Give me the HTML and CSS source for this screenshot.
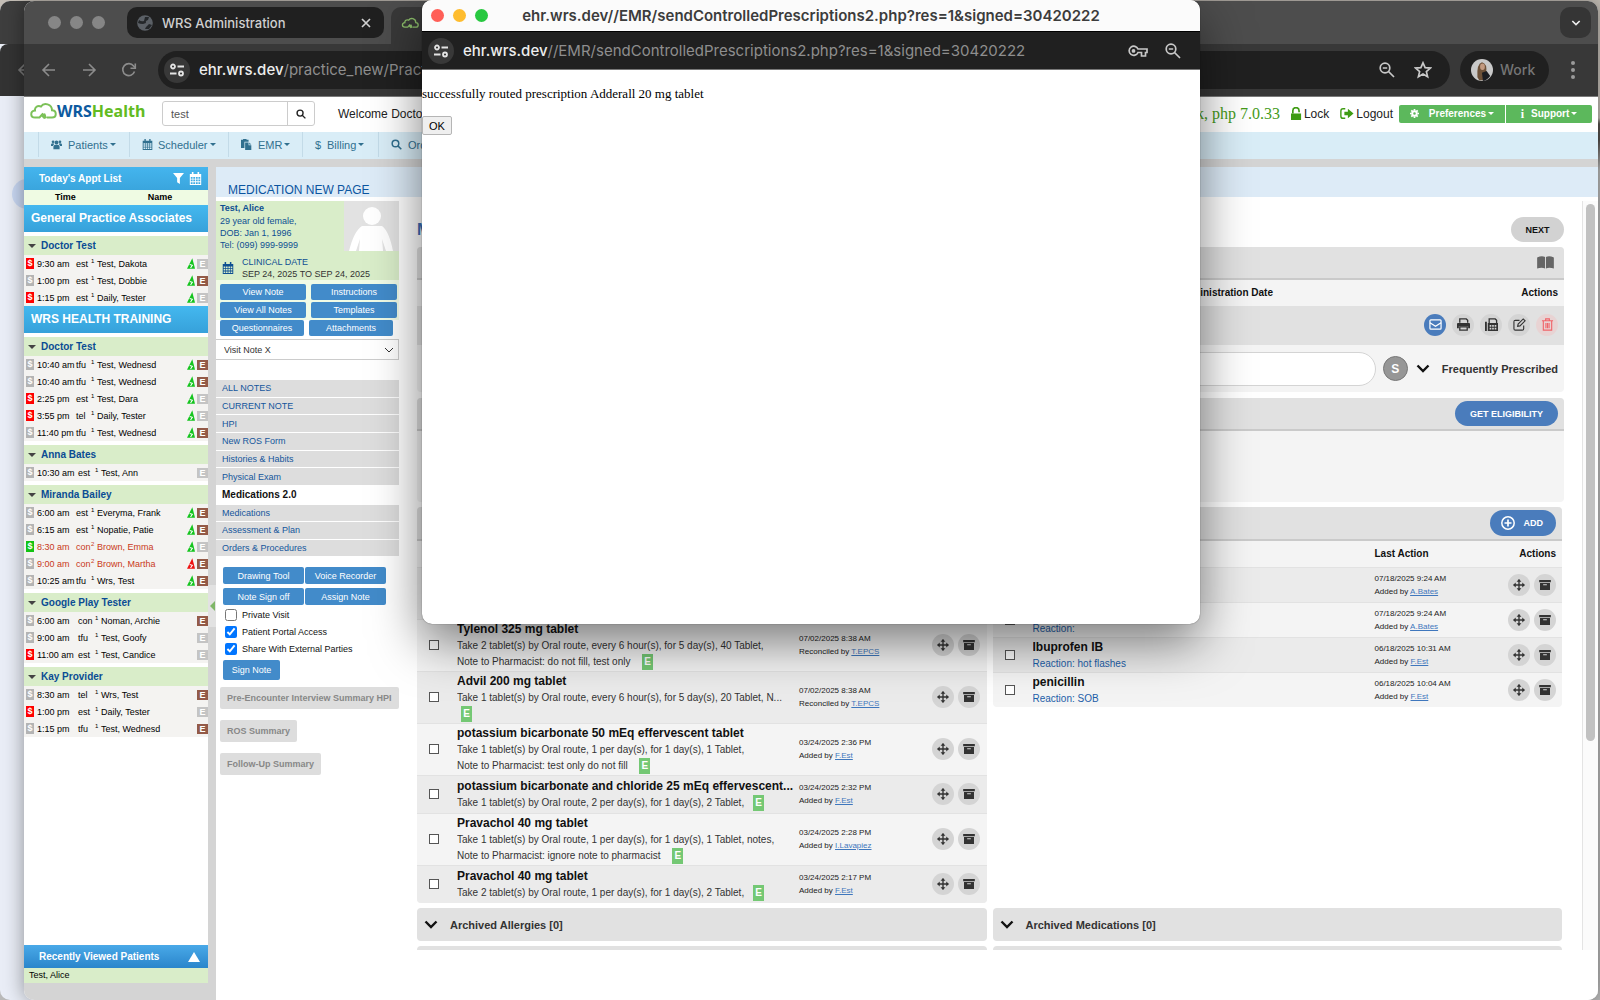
FILE: index.html
```html
<!DOCTYPE html>
<html lang="en">
<head>
<meta charset="utf-8">
<title>WRS Health EMR</title>
<link rel="stylesheet" href="styles.css">
</head>
<body>
<svg class="sprite" aria-hidden="true">
  <symbol id="i-back" viewBox="0 0 16 16"><path d="M14 8H2.500M8 2 2 8l6 6" fill="none" stroke="currentColor" stroke-width="1.600"/></symbol>
  <symbol id="i-fwd" viewBox="0 0 16 16"><path d="M2 8h11.500M8 2l6 6-6 6" fill="none" stroke="currentColor" stroke-width="1.600"/></symbol>
  <symbol id="i-reload" viewBox="0 0 16 16"><path d="M13.500 9.500A6 6 0 1 1 12.600 4L14 5.500" fill="none" stroke="currentColor" stroke-width="1.600"/><path d="M14.300 1.500v4.800H9.500" fill="none" stroke="currentColor" stroke-width="1.600"/></symbol>
  <symbol id="i-tune" viewBox="0 0 16 16"><g fill="none" stroke="currentColor" stroke-width="1.800"><circle cx="4" cy="4.500" r="2"/><path d="M8.500 4.500H15M1 11.500h6.500"/><circle cx="12" cy="11.500" r="2"/></g></symbol>
  <symbol id="i-zoomout" viewBox="0 0 16 16"><g fill="none" stroke="currentColor" stroke-width="1.700"><circle cx="6" cy="6" r="4.800"/><path d="M3.800 6h4.400M9.500 9.500 15 15"/></g></symbol>
  <symbol id="i-search" viewBox="0 0 16 16"><g fill="none" stroke="currentColor" stroke-width="2.200"><circle cx="6.500" cy="6.500" r="4.800"/><path d="M10 10l5 5"/></g></symbol>
  <symbol id="i-star" viewBox="0 0 16 16"><path d="M8 1.600l1.900 4.300 4.700.4-3.600 3.100 1.100 4.600L8 11.500 3.900 14 5 9.400 1.400 6.300l4.700-.4z" fill="none" stroke="currentColor" stroke-width="1.500"/></symbol>
  <symbol id="i-key" viewBox="0 0 20 12"><path d="M10 4h9v3.500h-1.500V11h-4V7.500H10A4.600 4.600 0 1 1 10 4z" fill="none" stroke="currentColor" stroke-width="1.700"/><circle cx="5.500" cy="5.900" r="1.900" fill="currentColor"/></symbol>
  <symbol id="i-chev" viewBox="0 0 14 9"><path d="M1.500 1.500 7 7l5.500-5.500" fill="none" stroke="currentColor" stroke-width="2.400"/></symbol>
  <symbol id="i-x" viewBox="0 0 10 10"><path d="M1 1l8 8M9 1 1 9" fill="none" stroke="currentColor" stroke-width="1.700"/></symbol>
  <symbol id="i-cloud" viewBox="0 0 28 18"><path d="M18 15.500h5c5 0 5-7 0-7.200C23 2 15 0 12 4.500 8.500 3 5.500 5.500 6 8.500 1 9 1 15.500 6 15.500h4.500l3-3.500 3 2" fill="none" stroke="currentColor" stroke-width="2"/><path d="M12 14l4-3 2 5-3 1z" fill="currentColor"/></symbol>
  <symbol id="i-users" viewBox="0 0 16 14"><circle cx="8" cy="4" r="2.800"/><circle cx="3" cy="3" r="2"/><circle cx="13" cy="3" r="2"/><path d="M3.500 14V10q.500-3 4.500-3t4.500 3v4zM0 9V7q.300-2 3-2l1.700.8Q3.300 7.500 3 9zM16 9V7q-.300-2-3-2l-1.700.8Q12.700 7.500 13 9z"/></symbol>
  <symbol id="i-cal" viewBox="0 0 16 16"><path fill-rule="evenodd" d="M1 2.500h2.500V0h2v2.500h5V0h2v2.500H15V16H1zM2.200 6v2.200h2.200V6zm3.100 0v2.200h2.200V6zm3.200 0v2.200h2.200V6zm3.100 0v2.200h2.200V6zM2.200 9.200v2.200h2.200V9.200zm3.100 0v2.200h2.200V9.200zm3.200 0v2.200h2.200V9.200zm3.100 0v2.200h2.200V9.200zM2.200 12.500v2.200h2.200v-2.200zm3.100 0v2.200h2.200v-2.200zm3.200 0v2.200h2.200v-2.200zm3.100 0v2.200h2.200v-2.200z"/></symbol>
  <symbol id="i-paste" viewBox="0 0 16 16"><path d="M0 1h3V0h5v1h3v3H5v9H0z"/><path d="M6 5h5v4h4v7H6zM12 5l3 3h-3z"/></symbol>
  <symbol id="i-filter" viewBox="0 0 12 12"><path d="M0 0h12L7.500 5.500V12l-3-2V5.500z"/></symbol>
  <symbol id="i-unlock" viewBox="0 0 12 14"><path d="M2 7V4a3.400 3.400 0 0 1 6.800 0v1.500" fill="none" stroke="currentColor" stroke-width="1.800"/><path d="M0 7h11v7H0z"/></symbol>
  <symbol id="i-out" viewBox="0 0 16 14"><path d="M6 1.500H3.500Q1 1.500 1 4v6q0 2.500 2.500 2.500H6" fill="none" stroke="currentColor" stroke-width="1.600"/><path d="M5 5h4V1.500L15.500 7 9 12.500V9H5z"/></symbol>
  <symbol id="i-gear" viewBox="0 0 16 16"><circle cx="8" cy="8" r="4" fill="none" stroke="currentColor" stroke-width="3.400"/><path d="M8 0v3M8 13v3M0 8h3M13 8h3M2.300 2.300l2 2M11.700 11.700l2 2M2.300 13.700l2-2M11.700 4.300l2-2" stroke="currentColor" stroke-width="3"/></symbol>
  <symbol id="i-book" viewBox="0 0 18 14"><path d="M0 1.500Q5-.8 8.500 1v12.500Q5 12 0 13.500zM18 1.500Q13-.8 9.500 1v12.500Q13 12 18 13.500z"/></symbol>
  <symbol id="i-mail" viewBox="0 0 14 12"><g fill="none" stroke="currentColor" stroke-width="1.300"><rect x="1" y="1" width="12" height="10" rx="1"/><path d="M1 4l6 4 6-4"/></g></symbol>
  <symbol id="i-print" viewBox="0 0 14 14"><path d="M3 5V1h7l1.500 1.500V5" fill="none" stroke="currentColor" stroke-width="1.400"/><path d="M1 5.500h12q1 0 1 1V11h-2V9H2v2H0V6.500q0-1 1-1z"/><path d="M3 9.500h8V13H3z" fill="none" stroke="currentColor" stroke-width="1.400"/></symbol>
  <symbol id="i-fax" viewBox="0 0 14 14"><path d="M0 4h2v10H0z"/><path d="M4.500 6V1h6.500l1.500 1.500V6" fill="none" stroke="currentColor" stroke-width="1.400"/><path fill-rule="evenodd" d="M3 5.500h11V14H3zM5 7.500v1.800h1.800V7.500zm2.700 0v1.800h1.800V7.500zm2.700 0v1.800h1.800V7.500zM5 10.500v1.800h1.800v-1.800zm2.700 0v1.800h1.800v-1.800zm2.700 0v1.800h1.800v-1.800z"/></symbol>
  <symbol id="i-edit" viewBox="0 0 14 14"><path d="M7 2.500H2.500Q1 2.500 1 4v7.500Q1 13 2.500 13H10q1.500 0 1.500-1.500V8M5 9l.5-2.500L11 1l2 2-5.500 5.500z" fill="none" stroke="currentColor" stroke-width="1.200"/></symbol>
  <symbol id="i-trash" viewBox="0 0 12 14"><path d="M0 3h12M4 3V1h4v2M1.500 3v10h9V3M4.300 5.500v5.500M6 5.500v5.500M7.700 5.500v5.500" fill="none" stroke="currentColor" stroke-width="1.200"/></symbol>
  <symbol id="i-move" viewBox="0 0 14 14"><path d="M7 1v12M1 7h12" stroke="currentColor" stroke-width="1.600"/><path d="M7 0l2.800 3.200H4.200zM7 14l2.800-3.200H4.200zM0 7l3.200-2.800v5.600zM14 7l-3.200-2.800v5.600z"/></symbol>
  <symbol id="i-box" viewBox="0 0 14 12"><path fill-rule="evenodd" d="M0 0h14v2.600H0zM1 3.600h12V12H1zM4.800 5v1.300h4.400V5z"/></symbol>
  <symbol id="i-plus" viewBox="0 0 14 14"><circle cx="7" cy="7" r="6.200" fill="none" stroke="currentColor" stroke-width="1.500"/><path d="M7 3.500v7M3.500 7h7" stroke="currentColor" stroke-width="1.700"/></symbol>
  <symbol id="i-tri" viewBox="0 0 9 12"><path d="M6 0 9 12H0z"/><path d="M3 7l3 1-2 3" fill="none" stroke="#fff" stroke-width="1.200"/></symbol>
  <symbol id="i-globe" viewBox="0 0 16 16"><circle cx="8" cy="8" r="7.800" fill="#5b6066"/><path d="M2 5q2.500 2 5 1l1-4h4l-1 3q-3 1-2 3l-3 1q-3 0-5-1zM9 12l3-3 3 1-3 4H8z" fill="#24272a"/></symbol>
</svg>

<div class="back-window" aria-hidden="true">
  <div class="back-tabs"></div>
  <div class="back-tools"><svg class="ico16"><use href="#i-back"/></svg></div>
  <div class="back-page"></div>
</div>

<div class="window main-window">
  <div class="tabs">
    <div class="lights grey"><i></i><i></i><i></i></div>
    <div class="tab"><svg class="ico16"><use href="#i-globe"/></svg><span>WRS Administration</span><svg class="ico10"><use href="#i-x"/></svg></div>
    <div class="tab-active"><svg class="fav"><use href="#i-cloud"/></svg></div>
    <button class="tab-menu" aria-label="Search tabs"><svg class="chev-s"><use href="#i-chev"/></svg></button>
  </div>
  <div class="toolbar">
    <svg class="ico16 nav-ico"><use href="#i-back"/></svg>
    <svg class="ico16 nav-ico"><use href="#i-fwd"/></svg>
    <svg class="ico16 nav-ico"><use href="#i-reload"/></svg>
    <div class="omnibox">
      <span class="site"><svg class="ico16"><use href="#i-tune"/></svg></span>
      <span class="url"><b>ehr.wrs.dev</b>/practice_new/PracticeHome.php</span>
      <svg class="ico16"><use href="#i-zoomout"/></svg>
      <svg class="ico18"><use href="#i-star"/></svg>
    </div>
    <div class="profile">
      <svg class="face" viewBox="0 0 24 24"><circle cx="12" cy="12" r="12" fill="#c9c9c9"/><path d="M7 20Q6 5 12 3.500 18 5 16.500 15l-1 8.300H9z" fill="#6d5138"/><ellipse cx="12.500" cy="8.500" rx="2.600" ry="3.500" fill="#c39a80"/><path d="M12 15l5-2 4 5.500q-3 4.500-8 5.500z" fill="#1b1d22"/></svg>
      <span>Work</span>
    </div>
    <div class="dots"><i></i><i></i><i></i></div>
  </div>

  <div class="app">
    <header class="head">
      <div class="logo"><svg><use href="#i-cloud"/></svg><span class="wrs">WRS</span><span class="health">Health</span></div>
      <div class="find">
        <input type="text" value="test" aria-label="Patient search">
        <button aria-label="Search"><svg><use href="#i-search"/></svg></button>
      </div>
      <span class="welcome">Welcome Doctor Test</span>
      <span class="build">k, php 7.0.33</span>
      <a class="hlink" href="#"><svg><use href="#i-unlock"/></svg>Lock</a>
      <a class="hlink out" href="#"><svg><use href="#i-out"/></svg>Logout</a>
      <div class="green-group">
        <button class="pref"><svg><use href="#i-gear"/></svg>Preferences<i class="caret"></i></button>
        <button class="supp"><span class="info">i</span>Support<i class="caret"></i></button>
      </div>
    </header>
    <nav class="menu">
      <a href="#" class="m1"><svg><use href="#i-users"/></svg>Patients<i class="caret"></i></a>
      <a href="#" class="m2"><svg><use href="#i-cal"/></svg>Scheduler<i class="caret"></i></a>
      <a href="#" class="m3"><svg><use href="#i-paste"/></svg>EMR<i class="caret"></i></a>
      <a href="#" class="m4"><span class="dollar">$</span>Billing<i class="caret"></i></a>
      <a href="#" class="m5"><svg><use href="#i-search"/></svg>Orders<i class="caret"></i></a>
    </nav>

    <div class="work">
      <aside class="appts">
        <div class="bar"><span>Today's Appt List</span><svg class="ico11"><use href="#i-filter"/></svg><svg class="ico13"><use href="#i-cal"/></svg></div>
        <div class="cols"><span>Time</span><span>Name</span></div>
        <h2>General Practice Associates</h2>
        <h3>Doctor Test</h3>
        <table>
          <tr><td><i class="d red">$</i></td><td>9:30 am</td><td>est</td><td><sup>1</sup></td><td>Test, Dakota</td><td><svg class="tri"><use href="#i-tri"/></svg></td><td><i class="e">E</i></td></tr>
          <tr><td><i class="d">$</i></td><td>1:00 pm</td><td>est</td><td><sup>1</sup></td><td>Test, Dobbie</td><td><svg class="tri"><use href="#i-tri"/></svg></td><td><i class="e br">E</i></td></tr>
          <tr><td><i class="d red">$</i></td><td>1:15 pm</td><td>est</td><td><sup>1</sup></td><td>Daily, Tester</td><td><svg class="tri"><use href="#i-tri"/></svg></td><td><i class="e">E</i></td></tr>
        </table>
        <h2>WRS HEALTH TRAINING</h2>
        <h3>Doctor Test</h3>
        <table>
          <tr><td><i class="d">$</i></td><td>10:40 am</td><td>tfu</td><td><sup>1</sup></td><td>Test, Wednesd</td><td><svg class="tri"><use href="#i-tri"/></svg></td><td><i class="e br">E</i></td></tr>
          <tr><td><i class="d">$</i></td><td>10:40 am</td><td>tfu</td><td><sup>1</sup></td><td>Test, Wednesd</td><td><svg class="tri"><use href="#i-tri"/></svg></td><td><i class="e br">E</i></td></tr>
          <tr><td><i class="d red">$</i></td><td>2:25 pm</td><td>est</td><td><sup>1</sup></td><td>Test, Dara</td><td><svg class="tri"><use href="#i-tri"/></svg></td><td><i class="e">E</i></td></tr>
          <tr><td><i class="d red">$</i></td><td>3:55 pm</td><td>tel</td><td><sup>1</sup></td><td>Daily, Tester</td><td><svg class="tri"><use href="#i-tri"/></svg></td><td><i class="e">E</i></td></tr>
          <tr><td><i class="d">$</i></td><td>11:40 pm</td><td>tfu</td><td><sup>1</sup></td><td>Test, Wednesd</td><td><svg class="tri"><use href="#i-tri"/></svg></td><td><i class="e br">E</i></td></tr>
        </table>
        <h3>Anna Bates</h3>
        <table class="wide">
          <tr><td><i class="d">$</i></td><td>10:30 am</td><td>est</td><td><sup>1</sup></td><td>Test, Ann</td><td></td><td><i class="e">E</i></td></tr>
        </table>
        <h3>Miranda Bailey</h3>
        <table>
          <tr><td><i class="d">$</i></td><td>6:00 am</td><td>est</td><td><sup>1</sup></td><td>Everyma, Frank</td><td><svg class="tri"><use href="#i-tri"/></svg></td><td><i class="e br">E</i></td></tr>
          <tr><td><i class="d">$</i></td><td>6:15 am</td><td>est</td><td><sup>1</sup></td><td>Nopatie, Patie</td><td><svg class="tri"><use href="#i-tri"/></svg></td><td><i class="e br">E</i></td></tr>
          <tr class="late"><td><i class="d grn">$</i></td><td>8:30 am</td><td>con</td><td><sup>2</sup></td><td>Brown, Emma</td><td><svg class="tri"><use href="#i-tri"/></svg></td><td><i class="e">E</i></td></tr>
          <tr class="late"><td><i class="d">$</i></td><td>9:00 am</td><td>con</td><td><sup>2</sup></td><td>Brown, Martha</td><td><svg class="tri alert"><use href="#i-tri"/></svg></td><td><i class="e br">E</i></td></tr>
          <tr><td><i class="d">$</i></td><td>10:25 am</td><td>tfu</td><td><sup>1</sup></td><td>Wrs, Test</td><td><svg class="tri"><use href="#i-tri"/></svg></td><td><i class="e br">E</i></td></tr>
        </table>
        <h3>Google Play Tester</h3>
        <table class="wide">
          <tr><td><i class="d">$</i></td><td>6:00 am</td><td>con</td><td><sup>1</sup></td><td>Noman, Archie</td><td></td><td><i class="e br">E</i></td></tr>
          <tr><td><i class="d">$</i></td><td>9:00 am</td><td>tfu</td><td><sup>1</sup></td><td>Test, Goofy</td><td></td><td><i class="e">E</i></td></tr>
          <tr><td><i class="d red">$</i></td><td>11:00 am</td><td>est</td><td><sup>1</sup></td><td>Test, Candice</td><td></td><td><i class="e">E</i></td></tr>
        </table>
        <h3>Kay Provider</h3>
        <table class="wide">
          <tr><td><i class="d">$</i></td><td>8:30 am</td><td>tel</td><td><sup>1</sup></td><td>Wrs, Test</td><td></td><td><i class="e br">E</i></td></tr>
          <tr><td><i class="d red">$</i></td><td>1:00 pm</td><td>est</td><td><sup>1</sup></td><td>Daily, Tester</td><td></td><td><i class="e">E</i></td></tr>
          <tr><td><i class="d">$</i></td><td>1:15 pm</td><td>tfu</td><td><sup>1</sup></td><td>Test, Wednesd</td><td></td><td><i class="e br">E</i></td></tr>
        </table>
        <div class="bar recent"><span>Recently Viewed Patients</span><i class="up"></i></div>
        <div class="recent-name">Test, Alice</div>
      </aside>
      <div class="divider"><button aria-label="Collapse list"><i></i></button></div>

      <section class="content">
        <h1>MEDICATION NEW PAGE</h1>
        <div class="split">
          <div class="chart">
            <div class="patient">
              <div class="who"><strong>Test, Alice</strong><span>29 year old female,</span><span>DOB: Jan 1, 1996</span><span>Tel: (099) 999-9999</span></div>
              <svg class="photo" viewBox="0 0 55 50"><path fill="#e2e2e2" d="M0 0h55v50H0z"/><g fill="#fff"><circle cx="28" cy="15" r="9"/><path d="M5 50q5-20 13-25h20q7 5 11 25h-7l-4-12 1 12H15l1-12-4 12z"/></g></svg>
              <div class="clinical"><svg><use href="#i-cal"/></svg><div><span>CLINICAL DATE</span><em>SEP 24, 2025 TO SEP 24, 2025</em></div></div>
            </div>
            <div class="pair"><button>View Note</button><button>Instructions</button><button>View All Notes</button><button>Templates</button></div>
            <div class="pair low"><button>Questionnaires</button><button>Attachments</button></div>
            <select aria-label="Visit note"><option>Visit Note X</option></select>
            <div class="links">
              <a href="#">ALL NOTES</a><a href="#">CURRENT NOTE</a><a href="#">HPI</a><a href="#">New ROS Form</a><a href="#">Histories &amp; Habits</a><a href="#">Physical Exam</a>
            </div>
            <a href="#" class="current">Medications 2.0</a>
            <div class="links rest"><a href="#">Medications</a><a href="#">Assessment &amp; Plan</a><a href="#">Orders &amp; Procedures</a></div>
            <div class="tools"><button>Drawing Tool</button><button>Voice Recorder</button><button>Note Sign off</button><button>Assign Note</button></div>
            <label class="tick"><input type="checkbox">Private Visit</label>
            <label class="tick"><input type="checkbox" checked>Patient Portal Access</label>
            <label class="tick"><input type="checkbox" checked>Share With External Parties</label>
            <button class="sign">Sign Note</button>
            <button class="grey-btn">Pre-Encounter Interview Summary HPI</button>
            <button class="grey-btn">ROS Summary</button>
            <button class="grey-btn">Follow-Up Summary</button>
          </div>

          <div class="pane">
            <div class="pane-body">
              <div class="title-row"><h2>Medications</h2><button class="next">NEXT</button></div>
              <div class="card">
                <div class="card-head"><svg class="book"><use href="#i-book"/></svg></div>
                <table class="rx">
                  <thead><tr><th></th><th>Administration Date</th><th class="r">Actions</th></tr></thead>
                  <tbody><tr><td></td><td></td><td><div class="acts">
                    <button class="rnd send" aria-label="Send"><svg><use href="#i-mail"/></svg></button>
                    <button class="rnd" aria-label="Print"><svg><use href="#i-print"/></svg></button>
                    <button class="rnd" aria-label="Fax"><svg><use href="#i-fax"/></svg></button>
                    <button class="rnd" aria-label="Edit"><svg><use href="#i-edit"/></svg></button>
                    <button class="rnd del" aria-label="Delete"><svg><use href="#i-trash"/></svg></button>
                  </div></td></tr></tbody>
                </table>
                <div class="rx-search"><input type="text" aria-label="Search medication"><button class="s-btn">S</button><button class="freq"><svg><use href="#i-chev"/></svg>Frequently Prescribed</button></div>
              </div>
              <div class="card elig"><div class="card-head"><button class="blue">GET ELIGIBILITY</button></div></div>

              <div class="two">
                <div class="card">
                  <div class="card-head tall"></div>
                  <table class="list">
                    <thead><tr><th></th><th></th><th></th><th></th></tr></thead>
                    <tbody>
                      <tr class="blank"><td></td><td></td><td></td><td></td></tr>
                      <tr><td><input type="checkbox" aria-label="Tylenol"></td><td><b>Tylenol 325 mg tablet</b><p>Take 2 tablet(s) by Oral route, every 6 hour(s), for 5 day(s), 40 Tablet,</p><p>Note to Pharmacist: do not fill, test only <i class="erx sp">E</i></p></td><td><small>07/02/2025 8:38 AM</small><small>Reconciled by <a href="#">T.EPCS</a></small></td><td><div class="acts"><button class="rnd" aria-label="Move"><svg><use href="#i-move"/></svg></button><button class="rnd" aria-label="Archive"><svg class="bx"><use href="#i-box"/></svg></button></div></td></tr>
                      <tr><td><input type="checkbox" aria-label="Advil"></td><td><b>Advil 200 mg tablet</b><p>Take 1 tablet(s) by Oral route, every 6 hour(s), for 5 day(s), 20 Tablet, N...</p><p><i class="erx">E</i></p></td><td><small>07/02/2025 8:38 AM</small><small>Reconciled by <a href="#">T.EPCS</a></small></td><td><div class="acts"><button class="rnd" aria-label="Move"><svg><use href="#i-move"/></svg></button><button class="rnd" aria-label="Archive"><svg class="bx"><use href="#i-box"/></svg></button></div></td></tr>
                      <tr><td><input type="checkbox" aria-label="Potassium bicarbonate"></td><td><b>potassium bicarbonate 50 mEq effervescent tablet</b><p>Take 1 tablet(s) by Oral route, 1 per day(s), for 1 day(s), 1 Tablet,</p><p>Note to Pharmacist: test only do not fill <i class="erx sp">E</i></p></td><td><small>03/24/2025 2:36 PM</small><small>Added by <a href="#">F.Est</a></small></td><td><div class="acts"><button class="rnd" aria-label="Move"><svg><use href="#i-move"/></svg></button><button class="rnd" aria-label="Archive"><svg class="bx"><use href="#i-box"/></svg></button></div></td></tr>
                      <tr><td><input type="checkbox" aria-label="Potassium chloride"></td><td><b>potassium bicarbonate and chloride 25 mEq effervescent...</b><p>Take 1 tablet(s) by Oral route, 2 per day(s), for 1 day(s), 2 Tablet,<i class="erx sp">E</i></p></td><td><small>03/24/2025 2:32 PM</small><small>Added by <a href="#">F.Est</a></small></td><td><div class="acts"><button class="rnd" aria-label="Move"><svg><use href="#i-move"/></svg></button><button class="rnd" aria-label="Archive"><svg class="bx"><use href="#i-box"/></svg></button></div></td></tr>
                      <tr><td><input type="checkbox" aria-label="Pravachol"></td><td><b>Pravachol 40 mg tablet</b><p>Take 1 tablet(s) by Oral route, 1 per day(s), for 1 day(s), 1 Tablet, notes,</p><p>Note to Pharmacist: ignore note to pharmacist <i class="erx sp">E</i></p></td><td><small>03/24/2025 2:28 PM</small><small>Added by <a href="#">I.Lavapiez</a></small></td><td><div class="acts"><button class="rnd" aria-label="Move"><svg><use href="#i-move"/></svg></button><button class="rnd" aria-label="Archive"><svg class="bx"><use href="#i-box"/></svg></button></div></td></tr>
                      <tr><td><input type="checkbox" aria-label="Pravachol"></td><td><b>Pravachol 40 mg tablet</b><p>Take 2 tablet(s) by Oral route, 1 per day(s), for 1 day(s), 2 Tablet,<i class="erx sp">E</i></p></td><td><small>03/24/2025 2:17 PM</small><small>Added by <a href="#">F.Est</a></small></td><td><div class="acts"><button class="rnd" aria-label="Move"><svg><use href="#i-move"/></svg></button><button class="rnd" aria-label="Archive"><svg class="bx"><use href="#i-box"/></svg></button></div></td></tr>
                    </tbody>
                  </table>
                </div>
                <div class="card">
                  <div class="card-head tall"><button class="blue add"><svg><use href="#i-plus"/></svg>ADD</button></div>
                  <table class="list allergy">
                    <thead><tr><th></th><th></th><th>Last Action</th><th class="r">Actions</th></tr></thead>
                    <tbody>
                      <tr><td></td><td></td><td><small>07/18/2025 9:24 AM</small><small>Added by <a href="#">A.Bates</a></small></td><td><div class="acts"><button class="rnd" aria-label="Move"><svg><use href="#i-move"/></svg></button><button class="rnd" aria-label="Archive"><svg class="bx"><use href="#i-box"/></svg></button></div></td></tr>
                      <tr><td><input type="checkbox" aria-label="Allergy"></td><td><b>&nbsp;</b><p>Reaction:</p></td><td><small>07/18/2025 9:24 AM</small><small>Added by <a href="#">A.Bates</a></small></td><td><div class="acts"><button class="rnd" aria-label="Move"><svg><use href="#i-move"/></svg></button><button class="rnd" aria-label="Archive"><svg class="bx"><use href="#i-box"/></svg></button></div></td></tr>
                      <tr><td><input type="checkbox" aria-label="Ibuprofen IB"></td><td><b>Ibuprofen IB</b><p>Reaction: hot flashes</p></td><td><small>06/18/2025 10:31 AM</small><small>Added by <a href="#">F.Est</a></small></td><td><div class="acts"><button class="rnd" aria-label="Move"><svg><use href="#i-move"/></svg></button><button class="rnd" aria-label="Archive"><svg class="bx"><use href="#i-box"/></svg></button></div></td></tr>
                      <tr><td><input type="checkbox" aria-label="Penicillin"></td><td><b>penicillin</b><p>Reaction: SOB</p></td><td><small>06/18/2025 10:04 AM</small><small>Added by <a href="#">F.Est</a></small></td><td><div class="acts"><button class="rnd" aria-label="Move"><svg><use href="#i-move"/></svg></button><button class="rnd" aria-label="Archive"><svg class="bx"><use href="#i-box"/></svg></button></div></td></tr>
                    </tbody>
                  </table>
                </div>
                <button class="fold"><svg><use href="#i-chev"/></svg>Archived Allergies [0]</button>
                <button class="fold"><svg><use href="#i-chev"/></svg>Archived Medications [0]</button>
                <div class="fold"></div>
                <div class="fold"></div>
              </div>
            </div>
            <div class="scroll"><i></i></div>
          </div>
        </div>
      </section>
    </div>
  </div>
</div>

<div class="window popup">
  <div class="pop-title"><div class="lights"><i></i><i></i><i></i></div><span>ehr.wrs.dev//EMR/sendControlledPrescriptions2.php?res=1&amp;signed=30420222</span></div>
  <div class="pop-url">
    <span class="site"><svg class="ico16"><use href="#i-tune"/></svg></span>
    <span class="url"><b>ehr.wrs.dev</b>//EMR/sendControlledPrescriptions2.php?res=1&amp;signed=30420222</span>
    <svg class="key"><use href="#i-key"/></svg>
    <svg class="ico16"><use href="#i-zoomout"/></svg>
  </div>
  <div class="pop-body"><p>successfully routed prescription Adderall 20 mg tablet</p><button>OK</button></div>
</div>
</body>
</html>
```
FILE: styles.css
```css
* { box-sizing: border-box; }
html, body { height: 100%; }
body {
  margin: 0;
  overflow: hidden;
  position: relative;
  background: linear-gradient(#c4beb6 0 118px, #55504c 124px 140px, #b9b9b9 170px);
  font: 9px/12px "Liberation Sans", Arial, sans-serif;
  color: #222;
}
button, input, select { font: inherit; color: inherit; margin: 0; }
button { border: 0; padding: 0; background: none; white-space: nowrap; }
a { color: inherit; text-decoration: none; }
svg { fill: currentColor; flex: none; display: block; }
.sprite { position: absolute; width: 0; height: 0; }
.ico10 { width: 10px; height: 10px; }
.ico11 { width: 11px; height: 11px; }
.ico13 { width: 13px; height: 13px; }
.ico16 { width: 16px; height: 16px; }
.ico18 { width: 18px; height: 18px; }

/* windows */
.back-window {
  position: absolute; inset: 1px auto 0 0; width: 200px;
  border-radius: 10px; overflow: hidden; background: #e9edf6;
}
.back-tabs { height: 43px; background: #3e3e3e; }
.back-tools { height: 52px; background: #333; border-radius: 8px 8px 0 0; padding: 18px 0 0 17px; color: #777; }
.back-page { width: 30px; height: 30px; margin: 83px 0 0 12px; border-radius: 50%; background: #c9d8f3; }
.window { position: absolute; overflow: hidden; display: flex; flex-direction: column; }
.main-window {
  inset: 1px 2px 0 24px; border-radius: 10px;
  background: #fff; box-shadow: 0 0 20px rgba(0, 0, 0, .4);
}
.popup {
  left: 422px; top: 0; width: 778px; height: 624px;
  border-radius: 10px; background: #fff;
  box-shadow: 0 0 1px rgba(0, 0, 0, .7), 0 18px 50px rgba(0, 0, 0, .5);
}
.lights { display: flex; gap: 9px; }
.lights i { width: 13px; height: 13px; border-radius: 50%; background: #ff5f57; }
.lights i:nth-child(2) { background: #febc2e; }
.lights i:nth-child(3) { background: #28c840; }
.lights.grey i { background: #868686; }

/* browser chrome */
.tabs { flex: none; height: 43px; background: #4d4d4d; display: flex; align-items: center; padding: 0 7px 0 24px; }
.tab {
  width: 257px; height: 31px; margin-left: 22px; padding: 0 13px 0 10px; border-radius: 10px;
  background: #202020; display: flex; align-items: center; gap: 9px;
  font: 500 13px/16px Inter, sans-serif; color: #d0d0d0;
}
.tab span { flex: 1; }
.tab-active { align-self: flex-end; width: 240px; height: 37px; margin-left: 7px; padding: 10px; border-radius: 10px 10px 0 0; background: #383838; color: #8cbf6a; }
.fav { width: 18px; height: 12px; }
.tab-menu { margin-left: auto; width: 31px; height: 31px; border-radius: 10px; background: #353535; color: #eee; display: grid; place-items: center; }
.chev-s { width: 10px; height: 6px; }
.toolbar {
  flex: none; height: 53px; background: #383838; border-bottom: 1px solid #7a7a7a; color: #c8c8c8;
  display: flex; align-items: center; padding: 0 23px 0 17px;
}
.nav-ico { margin-right: 24px; color: #8c8c8c; }
.nav-ico:nth-child(3) { margin-right: 21px; }
.omnibox { flex: 1; height: 38px; padding: 0 18px 0 6px; border-radius: 19px; background: #202020; display: flex; align-items: center; }
.site { width: 26px; height: 26px; border-radius: 50%; background: #383838; display: grid; place-items: center; color: #e4e4e4; flex: none; }
.url { flex: 1; margin-left: 9px; font: 15px/20px Inter, sans-serif; color: #8e8e8e; white-space: nowrap; }
.url b { font-weight: 500; color: #ededed; }
.omnibox .ico18 { margin-left: 19px; }
.profile { width: 89px; height: 38px; margin-left: 10px; padding-left: 11px; border-radius: 19px; background: #202020; display: flex; align-items: center; gap: 7px; font: 500 14px/18px Inter, sans-serif; color: #757575; }
.face { width: 22px; height: 22px; }
.dots { display: grid; gap: 3px; margin-left: 22px; }
.dots i { width: 4px; height: 4px; border-radius: 50%; background: #9a9a9a; }

/* application header */
.app { flex: 1; display: flex; flex-direction: column; min-height: 0; background: #d4d4d4; }
.head { flex: none; height: 35px; padding: 0 6px 2px 5px; background: #fff; display: flex; align-items: center; font-size: 12px; }
.logo { display: flex; align-items: center; width: 133px; padding-bottom: 6px; font: 700 16px/20px "Noto Sans", sans-serif; color: #0d5aa0; }
.logo svg { width: 28px; height: 18px; color: #7cc158; }
.logo .health { color: #62bb22; }
.find { display: flex; width: 153px; height: 25px; border: 1px solid #ccc; border-radius: 3px; }
.find input { flex: 1; min-width: 0; border: 0; border-right: 1px solid #ccc; padding: 0 8px; background: none; font-size: 11px; color: #555; }
.find button { width: 26px; display: grid; place-items: center; }
.find svg { width: 10px; height: 10px; }
.welcome { margin-left: 23px; white-space: nowrap; }
.build { margin-left: auto; font: 16px/20px "Liberation Serif", serif; color: #459b1a; }
.hlink { display: flex; align-items: center; gap: 2px; margin-left: 11px; }
.hlink svg { width: 11px; height: 13px; color: #3f9c14; }
.hlink.out svg { width: 14px; }
.green-group { display: flex; gap: 1px; margin-left: 6px; }
.green-group button { height: 18px; background: #5cb85c; color: #fff; font-size: 10px; font-weight: 700; display: flex; align-items: center; justify-content: center; }
.green-group svg { width: 9px; height: 9px; margin-right: 10px; }
.info { font: 700 12px/12px "Liberation Serif", serif; margin-right: 7px; }
.pref { width: 106px; border-radius: 2px 0 0 2px; }
.supp { width: 86px; border-radius: 0 2px 2px 0; }
.caret { border: 3px solid transparent; border-top-color: currentColor; border-bottom: 0; margin-left: 2px; }
.menu { flex: none; height: 27px; padding-left: 14px; background: #d9edf7; display: flex; font-size: 11px; color: #31708f; }
.menu a { display: flex; align-items: center; padding-left: 12px; border-left: 1px solid #c3dbe8; margin-bottom: 2px; }
.menu svg { width: 11px; height: 11px; margin-right: 6px; }
.m1 { width: 91px; }
.m2 { width: 99px; }
.m3 { width: 74px; }
.m4 { width: 76px; }
.menu .m2 svg { margin-right: 5px; }
.menu .dollar { width: 12px; }

/* appointment list */
.work { flex: 1; min-height: 0; margin-top: 8px; display: flex; }
.appts { width: 184px; margin-bottom: 17px; background: #fff; display: flex; flex-direction: column; flex: none; color: #000; }
.appts .bar { height: 23px; padding: 0 6px 0 15px; background: linear-gradient(#44b5ee, #3aa5dd); color: #fff; font: 700 10px/23px "Liberation Sans", Arial, sans-serif; display: flex; align-items: center; gap: 5px; }
.bar span { flex: 1; }
.cols { height: 15px; background: #effbe3; font-weight: 700; line-height: 15px; display: flex; padding-left: 31px; gap: 72px; }
.appts h2 { margin: 0; height: 27px; padding-left: 7px; background: linear-gradient(#44b8ef, #36a1da); color: #fff; font-size: 12px; line-height: 27px; }
.appts h3 { margin: 4px 0 0; height: 19px; padding-left: 4px; background: #d9edc9; color: #0a4c94; font-size: 10px; line-height: 19px; display: flex; align-items: center; }
.appts h3::before { content: ""; border: 4px solid transparent; border-top-color: #444; border-bottom: 0; margin-right: 5px; }
.appts table { width: 100%; table-layout: fixed; border-collapse: collapse; background: #f4f3f1; }
.appts td { height: 17px; padding: 0; line-height: 16px; white-space: nowrap; }
.appts td:nth-child(1) { width: 13px; padding-left: 2px; }
.appts td:nth-child(2) { width: 39px; }
.appts td:nth-child(3) { width: 15px; }
.appts td:nth-child(4) { width: 6px; }
.appts td:nth-child(6) { width: 10px; }
.appts td:nth-child(7) { width: 11px; }
.appts .wide td:nth-child(2) { width: 41px; }
.appts .wide td:nth-child(3) { width: 17px; }
.appts sup { font-size: 6px; line-height: 6px; }
.late { color: #c9391a; }
.d, .e { display: block; width: 8px; height: 11px; background: #b4b4b4; color: #fff; font: 700 9px/11px "Liberation Sans", Arial, sans-serif; text-align: center; }
.e { width: 11px; height: 10px; line-height: 10px; background: #c4c4c4; }
.d.red { background: #f00; }
.d.grn { background: #12c312; }
.e.br { background: #935a48; }
.tri { width: 8px; height: 11px; color: #14c41e; }
.tri.alert { color: #ee1111; }
.appts .recent { margin-top: auto; background: linear-gradient(#49a9e8, #2a85cb); }
.up { border: 6px solid transparent; border-bottom: 10px solid #fff; border-top: 0; margin-right: 2px; }
.recent-name { height: 15px; padding-left: 5px; background: #d9edc9; line-height: 15px; }
.divider { width: 8px; flex: none; padding-top: 418px; }
.divider button { width: 8px; height: 42px; background: #e2e2e2; display: grid; place-items: center; }
.divider i { border: 5px solid transparent; border-right-color: #7fb668; border-left: 0; }

/* chart column */
.content { flex: 1; min-width: 0; background: #fff; display: flex; flex-direction: column; }
.content h1 { flex: none; margin: 0; height: 30px; padding: 17px 0 0 12px; background: #ddebf7; color: #0b55a0; font-size: 12px; font-weight: 400; line-height: 13px; }
.split { flex: 1; display: flex; min-height: 0; padding-top: 4px; }
.chart { width: 183px; flex: none; color: #0e4f92; }
.patient { display: flex; flex-wrap: wrap; align-content: flex-start; justify-content: space-between; height: 79px; background: #d9edc9; }
.who { padding-left: 4px; display: grid; align-content: start; }
.who strong { line-height: 14px; }
.photo { width: 55px; height: 50px; }
.clinical { display: flex; gap: 8px; width: 100%; padding: 5px 0 0 6px; }
.clinical svg { width: 12px; height: 12px; margin-top: 6px; }
.clinical span, .clinical em { display: block; font-style: normal; }
.clinical em { color: #333; }
.chart button { background: #428bca; color: #fff; border-radius: 2px; }
.pair { display: grid; grid-template-columns: 86px 86px; gap: 2px 5px; padding: 4px 4px 2px; background: #f0fbe6; }
.pair button { height: 16px; }
.pair.low { background: none; grid-template-columns: 84px 84px; padding: 0 4px 3px; }
.chart select { display: block; width: 100%; height: 21px; padding: 0 14px 0 8px; border: 1px solid #ccc; border-left: 0; border-radius: 0; color: #333; appearance: none; background: #fff url("data:image/svg+xml,%3Csvg xmlns='http://www.w3.org/2000/svg' viewBox='0 0 10 6'%3E%3Cpath d='M1 1l4 4 4-4' fill='none' stroke='%23333' stroke-width='1'/%3E%3C/svg%3E") no-repeat right 4px center / 10px 6px; }
.links { display: grid; grid-auto-rows: 1fr; gap: 1px; height: 105px; margin-top: 20px; }
.links a, .current { padding-left: 6px; background: #ddd; display: flex; align-items: center; color: #14569c; }
.links.rest { height: 51px; margin: 0; }
.current { height: 20px; background: #fff; font-size: 10px; font-weight: 700; color: #111; }
.tools { display: grid; grid-template-columns: 81px 81px; gap: 4px 1px; padding: 11px 7px 1px; }
.tools button { height: 17px; }
.tick { display: flex; align-items: center; gap: 5px; height: 17px; padding-left: 9px; color: #111; }
.tick input { width: 12px; height: 12px; }
.chart .sign { display: block; width: 57px; height: 20px; margin: 3px 7px 7px; }
.chart .grey-btn { display: block; height: 22px; margin: 0 4px 11px; padding: 0 7px; background: #ddd; color: #888; font-weight: 700; }

/* medication pane */
.pane { flex: 1; min-width: 0; display: flex; margin-bottom: 50px; overflow: hidden; }
.pane-body { flex: 1; min-width: 0; padding: 16px 18px 0; }
.scroll { width: 16px; flex: none; border-left: 1px solid #e4e4e4; padding: 3px 3px 0; background: #fbfbfb; }
.scroll i { display: block; width: 9px; height: 72%; border-radius: 5px; background: #c1c1c1; }
.title-row { display: flex; justify-content: space-between; align-items: center; height: 25px; margin-bottom: 5px; }
.title-row h2 { margin: 0; font-size: 16px; color: #3c6cb4; }
.next { width: 53px; height: 25px; border-radius: 13px; background: #d2d2d2; color: #111; font-weight: 700; }
.card { background: #f4f4f4; border-radius: 4px; overflow: hidden; margin-bottom: 6px; }
.card-head { height: 33px; border-bottom: 2px solid #cacaca; background: #e1e1e1; display: flex; justify-content: flex-end; align-items: center; padding-right: 6px; }
.card-head.tall { height: 34px; }
.book { width: 17px; height: 13px; margin-right: 4px; color: #666; }
.card table { width: 100%; table-layout: fixed; border-collapse: collapse; }
.card th { height: 26px; padding: 0; text-align: left; font-size: 10px; color: #111; }
.card th.r { text-align: right; padding-right: 6px; }
.rx th:nth-child(2) { width: 200px; }
.rx th:nth-child(3) { width: 186px; }
.rx td { height: 39px; padding: 0 0 2px; background: #e1e1e1; }
.acts { display: flex; justify-content: flex-end; gap: 4px; padding-right: 7px; }
.allergy .acts, .rx .acts { padding-right: 6px; }
.rnd { width: 22px; height: 22px; border-radius: 50%; background: #d4d4d4; color: #333; display: grid; place-items: center; }
.rnd svg { width: 12px; height: 12px; }
.rnd .bx { height: 10px; }
.rx .acts { gap: 6px; }
.rx .rnd svg { width: 13px; height: 13px; }
.rnd.send { background: #4a7cbc; color: #fff; }
.rnd.del { background: #e8d3d3; color: #f0646a; }
.rx-search { height: 47px; display: flex; align-items: center; padding: 0 6px 0 12px; }
.rx-search input { flex: 1; height: 34px; border: 1px solid #d4d4d4; border-radius: 17px; background: #fff; padding: 0 14px; }
.s-btn { width: 25px; height: 25px; margin: 0 8px 0 7px; border-radius: 50%; border: 1px solid #777; background: #969696; color: #fff; font-size: 12px; font-weight: 700; }
.freq, .fold { display: flex; align-items: center; gap: 12px; font-size: 11px; font-weight: 700; color: #333; }
.freq svg, .fold svg { width: 14px; height: 9px; color: #111; }
.elig { height: 104px; margin-bottom: 5px; }
.blue { height: 25px; padding: 0 15px; border-radius: 13px; background: #4a7cbc; color: #fff; font-weight: 700; display: flex; align-items: center; gap: 9px; }
.add { height: 26px; padding: 0 13px 0 11px; }
.add svg { width: 14px; height: 14px; }
.two { display: grid; grid-template-columns: 1fr 1fr; gap: 5px 6px; margin-right: 2px; }
.two .card { margin: 0; align-self: start; }
.list th:nth-child(1) { width: 40px; }
.list th:nth-child(2) { width: 342px; }
.list th:nth-child(4) { width: 80px; }
.list td { padding: 1px 0; }
.list tbody tr { border-top: 1px solid #e2e2e2; height: 38px; }
.list tbody tr.blank { height: 52px; }
.list tbody tr:nth-child(odd) { background: #ebebeb; }
.list td:nth-child(1) { padding-left: 12px; }
.list td:nth-child(2) { padding: 0 2px 1px 0; }
.list input { display: block; appearance: none; width: 10px; height: 10px; border: 1px solid #555; background: #fff; }
.list b, .list p { display: block; margin: 0; overflow: hidden; text-overflow: ellipsis; white-space: nowrap; }
.list b { font-size: 12px; line-height: 18px; color: #111; }
.list p { font-size: 10px; line-height: 16px; height: 16px; color: #333; }
.list small { display: block; font-size: 8px; line-height: 13px; color: #222; }
.list small a { color: #3f77bd; text-decoration: underline; }
.list.allergy tbody tr { height: 35px; }
.list.allergy td:nth-child(2) { padding: 1px 0 0; }
.allergy b { line-height: 17px; }
.allergy p { color: #1d5fa9; }
.erx { display: inline-block; width: 11px; height: 16px; margin-left: 4px; background: #74c874; color: #fff; font: 700 10px/16px "Liberation Sans", Arial, sans-serif; text-align: center; vertical-align: top; }
.erx.sp { margin-left: 9px; }
.fold { height: 33px; padding-left: 7px; border-radius: 4px; background: #e1e1e1; }

/* popup window */
.pop-title { flex: none; height: 32px; padding: 0 9px; background: #fbfbfb; border-bottom: 1px solid #000; display: flex; align-items: center; font: 600 15px/18px Inter, sans-serif; color: #3c3c3c; }
.pop-title span { flex: 1; text-align: center; padding-right: 57px; white-space: nowrap; }
.pop-url { flex: none; height: 38px; padding: 0 19px 0 6px; background: #202020; border-bottom: 1px solid #777; display: flex; align-items: center; color: #c8c8c8; }
.key { width: 20px; height: 12px; margin-right: 17px; }
.pop-body { padding-top: 16px; font: 13px/16px "Liberation Serif", serif; color: #000; }
.pop-body p { margin: 0 0 14px; }
.pop-body button { width: 30px; height: 19px; border: 1px solid #b5b5b5; border-radius: 2px; background: #efefef; font: 11px/16px "Liberation Sans", Arial, sans-serif; display: block; }
```
